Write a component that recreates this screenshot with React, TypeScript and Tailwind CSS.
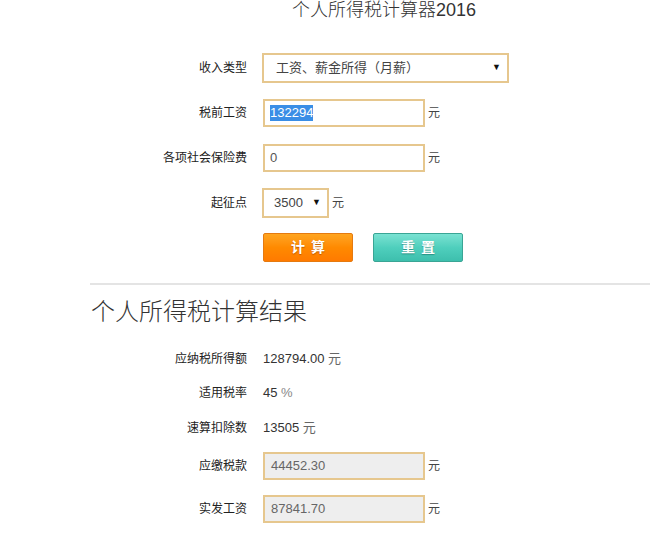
export default function App() {
  const label = "w-[247px] shrink-0 text-right text-[12px] text-[#222]";
  const inputBox =
    "ml-[16px] w-[162px] h-[28px] border-2 border-[#e6c78e] flex items-center pl-[5px] text-[13px]";
  return (
    <div className="w-[650px] h-[545px] bg-white overflow-hidden font-['Liberation_Sans','Noto_Sans_CJK_SC',sans-serif] text-[#333]">
      <h1 className="pl-[292px] text-[18px] leading-[20px] text-[#333] font-light">
        个人所得税计算器2016
      </h1>

      <div className="mt-[33px] flex items-center h-[30px]">
        <div className={label}>收入类型</div>
        <div className="ml-[15px] w-[247px] h-[30px] border-2 border-[#e6c78e] flex items-center justify-between pl-[12px] pr-[6px] text-[13px] text-[#444]">
          <span>工资、薪金所得（月薪）</span>
          <span className="text-[9px] text-[#111]">▼</span>
        </div>
      </div>

      <div className="mt-[16px] flex items-center h-[28px]">
        <div className={label}>税前工资</div>
        <div className={inputBox}>
          <span className="bg-[#3a8ee6] text-white leading-[16px]">132294</span>
        </div>
        <span className="ml-[3px] text-[12px] text-[#444]">元</span>
      </div>

      <div className="mt-[17px] flex items-center h-[28px]">
        <div className={label}>各项社会保险费</div>
        <div className={inputBox + " text-[#555]"}>0</div>
        <span className="ml-[3px] text-[12px] text-[#444]">元</span>
      </div>

      <div className="mt-[16px] flex items-center h-[30px]">
        <div className={label}>起征点</div>
        <div className="ml-[15px] w-[67px] h-[30px] border-2 border-[#e6c78e] flex items-center justify-between pl-[10px] pr-[6px] text-[13px] text-[#444]">
          <span>3500</span>
          <span className="text-[9px] text-[#111]">▼</span>
        </div>
        <span className="ml-[3px] text-[12px] text-[#444]">元</span>
      </div>

      <div className="mt-[15px] flex items-center gap-[20px] pl-[263px]">
        <button className="w-[90px] h-[29px] rounded-[2px] border border-[#e57a10] bg-gradient-to-b from-[#ffa51f] via-[#ff8a00] to-[#ff7a00] text-white text-[14px] font-bold tracking-[6px] pl-[6px] [text-shadow:0_1px_1px_rgba(150,60,0,0.6)]">
          计算
        </button>
        <button className="w-[90px] h-[29px] rounded-[2px] border border-[#3aa595] bg-gradient-to-b from-[#79e2d2] via-[#4fcfbd] to-[#3dbfad] text-white text-[14px] font-bold tracking-[6px] pl-[6px] [text-shadow:0_1px_1px_rgba(20,110,100,0.6)]">
          重置
        </button>
      </div>

      <div className="mt-[21px] ml-[90px] h-[2px] bg-[#e4e4e4]" />

      <h2 className="mt-[13px] pl-[91px] text-[24px] leading-[28px] text-[#333] font-light">
        个人所得税计算结果
      </h2>

      <div className="mt-[23px] flex items-center h-[20px]">
        <div className={label}>应纳税所得额</div>
        <span className="ml-[16px] text-[13px] text-[#333]">
          128794.00 <span className="text-[#666]">元</span>
        </span>
      </div>
      <div className="mt-[14px] flex items-center h-[20px]">
        <div className={label}>适用税率</div>
        <span className="ml-[16px] text-[13px] text-[#333]">
          45 <span className="text-[#888]">%</span>
        </span>
      </div>
      <div className="mt-[15px] flex items-center h-[20px]">
        <div className={label}>速算扣除数</div>
        <span className="ml-[16px] text-[13px] text-[#333]">
          13505 <span className="text-[#666]">元</span>
        </span>
      </div>

      <div className="mt-[14px] flex items-center h-[27px]">
        <div className={label}>应缴税款</div>
        <div className={inputBox + " h-[27px] bg-[#eeeeee] text-[#666] pl-[6px]"}>44452.30</div>
        <span className="ml-[3px] text-[12px] text-[#444]">元</span>
      </div>
      <div className="mt-[16px] flex items-center h-[27px]">
        <div className={label}>实发工资</div>
        <div className={inputBox + " h-[27px] bg-[#eeeeee] text-[#666] pl-[6px]"}>87841.70</div>
        <span className="ml-[3px] text-[12px] text-[#444]">元</span>
      </div>
    </div>
  );
}
